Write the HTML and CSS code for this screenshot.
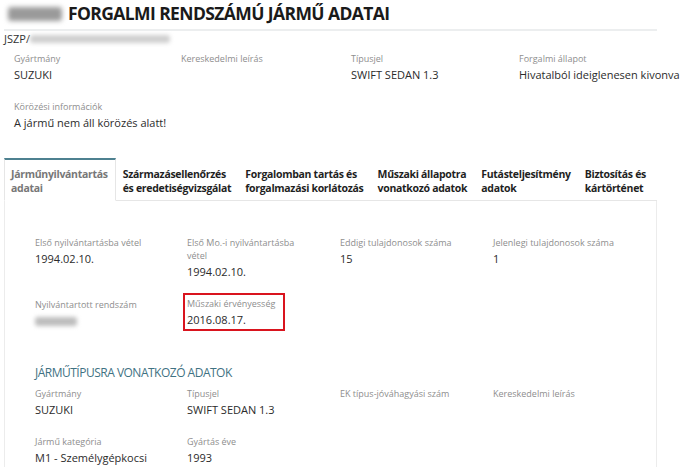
FILE: index.html
```html
<!DOCTYPE html>
<html lang="hu">
<head>
<meta charset="utf-8">
<link rel="stylesheet" href="styles.css">
</head>
<body>
<div class="page">
  <div class="head">
    <h1 class="title"><span class="blur blur-plate"></span>FORGALMI RENDSZÁMÚ JÁRMŰ ADATAI</h1>
    <div class="ref">JSZP/<span class="blur blur-ref"></span></div>
  </div>

  <div class="grid top-grid">
    <div class="field"><div class="lbl">Gyártmány</div><div class="val">SUZUKI</div></div>
    <div class="field"><div class="lbl">Kereskedelmi leírás</div><div class="val"></div></div>
    <div class="field"><div class="lbl">Típusjel</div><div class="val">SWIFT SEDAN 1.3</div></div>
    <div class="field"><div class="lbl">Forgalmi állapot</div><div class="val">Hivatalból ideiglenesen kivonva</div></div>
  </div>
  <div class="grid top-grid second">
    <div class="field wide"><div class="lbl">Körözési információk</div><div class="val">A jármű nem áll körözés alatt!</div></div>
  </div>

  <div class="tabs">
    <div class="tab active">Járműnyilvántartás<br>adatai</div>
    <div class="tab">Származásellenőrzés<br>és eredetiségvizsgálat</div>
    <div class="tab">Forgalomban tartás és<br>forgalmazási korlátozás</div>
    <div class="tab">Műszaki állapotra<br>vonatkozó adatok</div>
    <div class="tab">Futásteljesítmény<br>adatok</div>
    <div class="tab">Biztosítás és<br>kártörténet</div>
    <div class="tab-fill"></div>
  </div>

  <div class="panel">
    <div class="grid panel-grid">
      <div class="field"><div class="lbl">Első nyilvántartásba vétel</div><div class="val">1994.02.10.</div></div>
      <div class="field"><div class="lbl">Első Mo.-i nyilvántartásba<br>vétel</div><div class="val">1994.02.10.</div></div>
      <div class="field"><div class="lbl">Eddigi tulajdonosok száma</div><div class="val">15</div></div>
      <div class="field"><div class="lbl">Jelenlegi tulajdonosok száma</div><div class="val">1</div></div>
    </div>
    <div class="grid panel-grid row2">
      <div class="field"><div class="lbl">Nyilvántartott rendszám</div><div class="val"><span class="blur blur-num"></span></div></div>
      <div class="field"><div class="highlight"><div class="lbl">Műszaki érvényesség</div><div class="val">2016.08.17.</div></div></div>
    </div>

    <h2 class="section">JÁRMŰTÍPUSRA VONATKOZÓ ADATOK</h2>
    <div class="grid panel-grid">
      <div class="field"><div class="lbl">Gyártmány</div><div class="val">SUZUKI</div></div>
      <div class="field"><div class="lbl">Típusjel</div><div class="val">SWIFT SEDAN 1.3</div></div>
      <div class="field"><div class="lbl">EK típus-jóváhagyási szám</div><div class="val"></div></div>
      <div class="field"><div class="lbl">Kereskedelmi leírás</div><div class="val"></div></div>
    </div>
    <div class="grid panel-grid row3">
      <div class="field"><div class="lbl">Jármű kategória</div><div class="val">M1 - Személygépkocsi</div></div>
      <div class="field"><div class="lbl">Gyártás éve</div><div class="val">1993</div></div>
    </div>
  </div>
</div>
</body>
</html>
```

FILE: styles.css
```css
html, body {
  margin: 0;
  padding: 0;
  background: #ffffff;
}
body {
  font-family: "Open Sans", "Liberation Sans", sans-serif;
  color: #333333;
  width: 700px;
  height: 467px;
  overflow: hidden;
}
.page {
  width: 653px;
  padding-left: 4px;
}
.title {
  margin: 0;
  padding: 3px 0 5px 4px;
  font-size: 17.5px;
  font-weight: 700;
  letter-spacing: -0.6px;
  line-height: 21px;
  color: #1a1a1a;
  border-bottom: 2px solid #eceeef;
  display: flex;
  align-items: center;
}
.blur {
  display: inline-block;
  background: #a9a9a9;
  filter: blur(2.5px);
  border-radius: 3px;
}
.blur-plate {
  width: 54px;
  height: 14px;
  margin-right: 6px;
  background: #9a9a9a;
}
.ref {
  font-size: 11px;
  line-height: 14px;
  color: #333;
  padding-top: 1px;
  display: flex;
  align-items: center;
}
.blur-ref {
  width: 140px;
  height: 8px;
  background: #cfcfcf;
  filter: blur(2px);
}
.grid {
  display: grid;
}
.top-grid {
  grid-template-columns: 167px 170px 168px 168px;
  padding-left: 10px;
  margin-top: 6px;
}
.top-grid.second {
  margin-top: 17px;
}
.field .lbl {
  font-size: 9px;
  line-height: 13px;
  color: #8e8e8e;
  font-weight: 400;
}
.field .val {
  font-size: 11px;
  line-height: 16px;
  color: #2b2b2b;
  margin-top: 2px;
  min-height: 16px;
}
.wide {
  grid-column: span 2;
}
.tabs {
  display: flex;
  margin-top: 27px;
}
.tab {
  font-size: 10.5px;
  line-height: 14px;
  font-weight: 700;
  letter-spacing: -0.3px;
  color: #1f1f1f;
  padding: 9px 7px 4px 7px;
  border-bottom: 1px solid #e6e6e6;
  white-space: nowrap;
}
.tab.active {
  color: #777777;
  border-top: 2px solid #4e8190;
  border-left: 1px solid #e6e6e6;
  border-right: 1px solid #e6e6e6;
  border-bottom-color: transparent;
  padding: 7px 7px 5px 6px;
  background: #ffffff;
}
.tab-fill {
  flex: 1;
  border-bottom: 1px solid #e6e6e6;
}
.panel {
  border-left: 1px solid #ececec;
  border-right: 1px solid #ececec;
  padding: 35px 0 20px 30px;
}
.panel-grid {
  grid-template-columns: 152px 153px 153px 153px;
}
.panel-grid.row2 {
  margin-top: 18px;
}
.panel-grid.row3 {
  margin-top: 17px;
}
.highlight {
  border: 2px solid #d9141e;
  margin: -5px 0 0 -4px;
  padding: 2px 0 1px 2px;
  width: 96px;
}
.blur-num {
  width: 42px;
  height: 9px;
  background: #bdbdbd;
  filter: blur(2px);
  margin-top: 4px;
}
.section {
  margin: 34px 0 6px 0;
  font-size: 12px;
  letter-spacing: -0.5px;
  line-height: 16px;
  font-weight: 400;
  color: #3f7283;
}
```
